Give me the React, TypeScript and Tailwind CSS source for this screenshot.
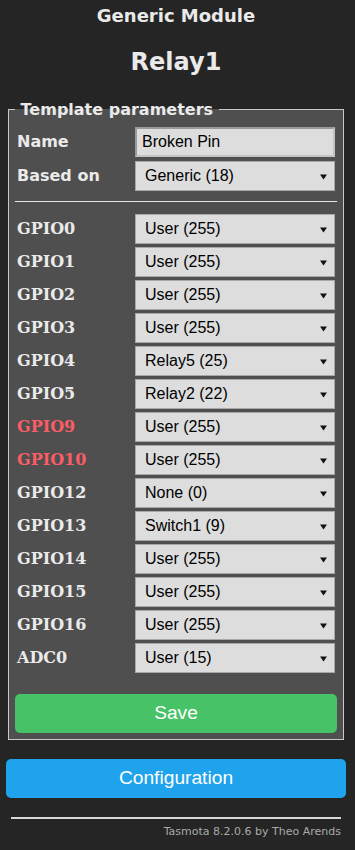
import React from "react";

const rows: { label: string; value: string; red?: boolean }[] = [
  { label: "GPIO0", value: "User (255)" },
  { label: "GPIO1", value: "User (255)" },
  { label: "GPIO2", value: "User (255)" },
  { label: "GPIO3", value: "User (255)" },
  { label: "GPIO4", value: "Relay5 (25)" },
  { label: "GPIO5", value: "Relay2 (22)" },
  { label: "GPIO9", value: "User (255)", red: true },
  { label: "GPIO10", value: "User (255)", red: true },
  { label: "GPIO12", value: "None (0)" },
  { label: "GPIO13", value: "Switch1 (9)" },
  { label: "GPIO14", value: "User (255)" },
  { label: "GPIO15", value: "User (255)" },
  { label: "GPIO16", value: "User (255)" },
  { label: "ADC0", value: "User (15)" },
];

function Select({ value }: { value: string }) {
  return (
    <div className="flex h-[30px] w-[200px] items-center justify-between border border-[#a8a8a8] bg-[#dddddd] pl-[9px] pr-[7px] font-['Liberation_Sans'] text-[16px] text-black">
      <span>{value}</span>
      <svg width="7" height="6" viewBox="0 0 7 6" className="mt-[1px]">
        <polygon points="0,0.5 7,0.5 3.5,5.5" fill="#111" />
      </svg>
    </div>
  );
}

export default function App() {
  return (
    <div className="min-h-[850px] bg-[#252525] font-['DejaVu_Sans',sans-serif] text-[#eaeaea]">
      <div className="mx-[6px] w-[340px] pt-[5px]">
        <h3 className="text-center text-[18px] font-bold leading-[22px]">Generic Module</h3>
        <h2 className="mt-[21px] text-center text-[24px] font-bold leading-[28px]">Relay1</h2>
        <fieldset className="mx-[2px] mt-[24px] border border-[#c8c8c8] bg-[#4f4f4f] px-[6px] pb-[6px]">
          <legend className="ml-0 text-[16px] font-bold leading-[19px]">&nbsp;Template parameters&nbsp;</legend>
          <div className="pt-[8px]">
            <div className="grid grid-cols-[120px_200px] items-center gap-y-[4px]">
              <div className="pl-[2px] text-[16px] font-bold">Name</div>
              <div className="flex h-[30px] w-[200px] items-center border-2 border-t-[#9a9a9a] border-l-[#9a9a9a] border-r-[#c4c4c4] border-b-[#c4c4c4] bg-[#dddddd] pl-[5px] font-['Liberation_Sans'] text-[16px] text-black">
                Broken Pin
              </div>
              <div className="pl-[2px] text-[16px] font-bold">Based on</div>
              <Select value="Generic (18)" />
            </div>
            <div className="mt-[10px] h-[2px] w-full border-t border-[#e6e6e6]" />
            <div className="mt-[11px] grid grid-cols-[120px_200px] items-center gap-y-[3px]">
              {rows.map((r) => (
                <React.Fragment key={r.label}>
                  <div
                    className={
                      "pl-[2px] font-['DejaVu_Serif',serif] text-[16px] font-bold " +
                      (r.red ? "text-[#fb5d67]" : "text-[#eaeaea]")
                    }
                  >
                    {r.label}
                  </div>
                  <Select value={r.value} />
                </React.Fragment>
              ))}
            </div>
            <button className="mt-[21px] h-[39px] w-full rounded-[5px] bg-[#47c266] font-['Liberation_Sans'] text-[19.2px] text-white">
              Save
            </button>
          </div>
        </fieldset>
        <button className="mt-[19px] h-[39px] w-full rounded-[5px] bg-[#1fa3ec] font-['Liberation_Sans'] text-[19.2px] text-white">
          Configuration
        </button>
        <div className="mx-[5px] mt-[19px] h-[2px] border-t-2 border-[#d8d8d8]" />
        <div className="mt-[6px] pr-[5px] text-right text-[11px] leading-[13px] text-[#aaaaaa]">
          Tasmota 8.2.0.6 by Theo Arends
        </div>
      </div>
    </div>
  );
}
